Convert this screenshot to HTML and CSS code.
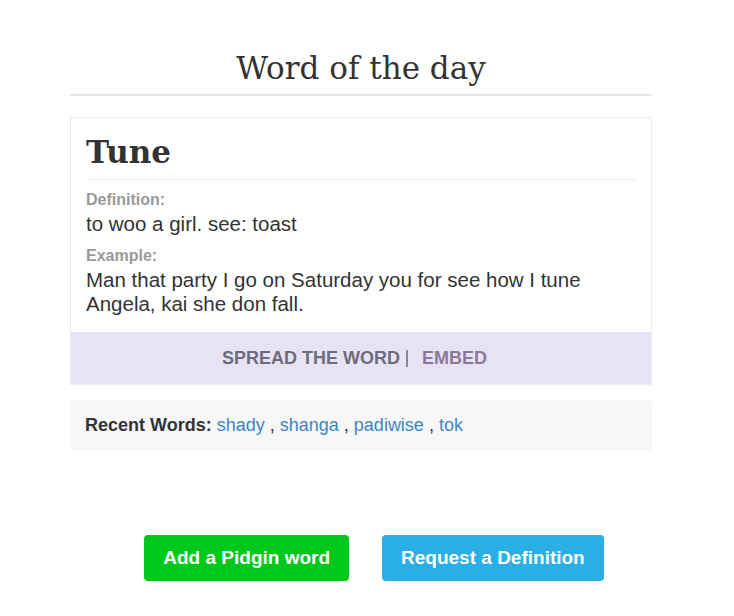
FILE: index.html
```html
<!DOCTYPE html>
<html>
<head>
<meta charset="utf-8">
<link rel="stylesheet" href="styles.css">
</head>
<body>
<div class="page">
  <h1 class="title">Word of the day</h1>
  <div class="card">
    <div class="card-body">
      <h2 class="word">Tune</h2>
      <div class="label">Definition:</div>
      <div class="text">to woo a girl. see: toast</div>
      <div class="label">Example:</div>
      <div class="text">Man that party I go on Saturday you for see how I tune Angela, kai she don fall.</div>
    </div>
    <div class="spread">
      <span class="spread-link">SPREAD THE WORD</span><span class="sep"></span><span class="embed">EMBED</span>
    </div>
  </div>
  <div class="recent">
    <b>Recent Words:</b> <a href="#">shady</a> , <a href="#">shanga</a> , <a href="#">padiwise</a> , <a href="#">tok</a>
  </div>
  <div class="actions">
    <a class="btn btn-green" href="#">Add a Pidgin word</a>
    <a class="btn btn-blue" href="#">Request a Definition</a>
  </div>
</div>
</body>
</html>
```
FILE: styles.css
```css
html, body {
  margin: 0;
  padding: 0;
  background: #fff;
}
body {
  font-family: "Liberation Sans", Arial, sans-serif;
  color: #333;
}
.page {
  width: 582px;
  margin-left: 70px;
  padding-top: 48px;
}
.title {
  margin: 0;
  font-family: "DejaVu Serif", "Liberation Serif", serif;
  font-weight: normal;
  font-size: 31px;
  line-height: 40px;
  text-align: center;
  color: #333;
  padding-bottom: 6px;
  border-bottom: 2px solid #e6e6e6;
}
.card {
  margin-top: 21px;
  border: 1px solid #ececec;
}
.card-body {
  padding: 12px 15px 16px;
}
.word {
  margin: 0;
  font-family: "DejaVu Serif", "Liberation Serif", serif;
  font-weight: bold;
  font-size: 31px;
  line-height: 44px;
  color: #333;
  padding-bottom: 5px;
  border-bottom: 1px solid #eee;
}
.label {
  margin-top: 10px;
  font-size: 16px;
  font-weight: bold;
  color: #999;
  line-height: 20px;
}
.text {
  margin-top: 2px;
  font-size: 20.5px;
  line-height: 24px;
  color: #333;
}
.spread {
  background: #e6e4f4;
  height: 52px;
  padding-right: 13px;
  display: flex;
  align-items: center;
  justify-content: center;
  font-size: 18px;
  font-weight: bold;
}
.spread-link {
  color: #6f6b7c;
}
.sep {
  display: inline-block;
  width: 2px;
  height: 17px;
  background: #8a8794;
  margin: 0 14px 0 6px;
}
.embed {
  color: #8b7997;
}
.recent {
  margin-top: 15px;
  background: #f7f7f7;
  border-radius: 3px;
  padding: 14px 15px;
  font-size: 18px;
  line-height: 23px;
  color: #333;
}
.recent a {
  color: #3d86c6;
  text-decoration: none;
}
.actions {
  margin-top: 84px;
  padding-left: 26px;
  display: flex;
  justify-content: center;
  gap: 33px;
}
.btn {
  display: block;
  height: 46px;
  line-height: 46px;
  padding: 0 19px;
  border-radius: 4px;
  color: #fff;
  font-size: 19px;
  font-weight: bold;
  text-decoration: none;
}
.btn-green {
  background: #00c81a;
}
.btn-blue {
  background: #2aaee3;
}
```
